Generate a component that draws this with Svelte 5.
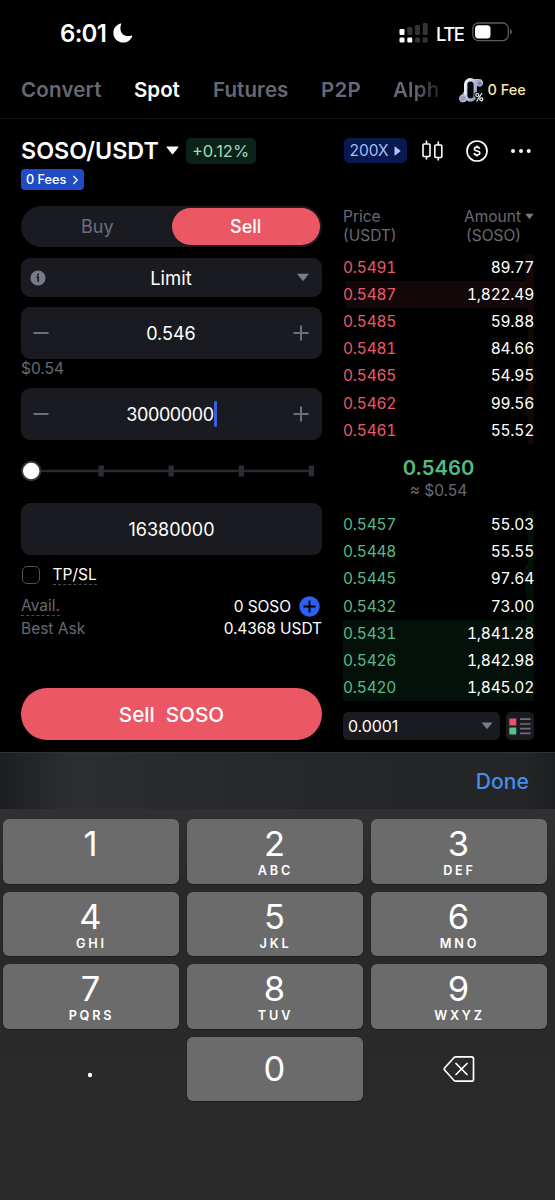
<script>
  const tabs = ['Convert', 'Spot', 'Futures', 'P2P', 'Alph'];
  const asks = [
    ['0.5491', '89.77', 4.5],
    ['0.5487', '1,822.49', 98.5],
    ['0.5485', '59.88', 3],
    ['0.5481', '84.66', 3],
    ['0.5465', '54.95', 3],
    ['0.5462', '99.56', 4.5],
    ['0.5461', '55.52', 3]
  ];
  const bids = [
    ['0.5457', '55.03', 3],
    ['0.5448', '55.55', 3],
    ['0.5445', '97.64', 4.5],
    ['0.5432', '73.00', 3.5],
    ['0.5431', '1,841.28', 100],
    ['0.5426', '1,842.98', 100],
    ['0.5420', '1,845.02', 100]
  ];
  const keys = [
    ['1', ''], ['2', 'ABC'], ['3', 'DEF'],
    ['4', 'GHI'], ['5', 'JKL'], ['6', 'MNO'],
    ['7', 'PQRS'], ['8', 'TUV'], ['9', 'WXYZ']
  ];
</script>

<div class="screen">
  <div class="status">
    <span class="time">6:01</span>
    <svg class="moon" width="20" height="20" viewBox="0 0 20 20"><path d="M7.2.6C3.200 2 .4 5.600.4 9.900c0 5.500 4.400 9.600 9.700 9.600 4.100 0 7.600-2.400 9.100-6.100.2-.6-.3-1-.9-.8-1 .4-2 .5-3 .5-4.700 0-7.900-3.200-7.900-7.900 0-1.300.2-2.500.7-3.600.3-.7-.2-1.300-.9-1z" fill="#fff" /></svg>
    <svg class="signal" width="30" height="22" viewBox="0 0 30 22">
      <g fill="#fff"><rect x=".5" y="7" width="5" height="6" rx="1.200" /><rect x=".5" y="15.500" width="5" height="5" rx="1.200" /><rect x="8.300" y="15.500" width="5" height="5" rx="1.200" /></g>
      <g fill="#343434"><rect x="8.300" y="5" width="5" height="8" rx="1.200" /><rect x="16" y="3" width="5" height="10" rx="1.200" /><rect x="23.700" y="1" width="5" height="12" rx="1.200" /><rect x="16" y="15.500" width="5" height="5" rx="1.200" /><rect x="23.700" y="15.500" width="5" height="5" rx="1.200" /></g>
    </svg>
    <span class="lte">LTE</span>
    <svg class="battery" width="42" height="20" viewBox="0 0 42 20"><rect x=".8" y="1" width="35.500" height="17.600" rx="5.500" fill="none" stroke="#5c5c5c" stroke-width="1.300" /><rect x="3" y="3.200" width="15.500" height="13.200" rx="3.500" fill="#fff" /><path d="M38 7v5.600c2.500-.8 2.500-4.800 0-5.600z" fill="#5c5c5c" /></svg>
  </div>

  <nav>
    {#each tabs as tab, i}
      <span class="tab t{i}" class:active={i === 1}>{tab}</span>
    {/each}
    <svg class="promo" width="26" height="26" viewBox="0 0 26 26">
      <defs><linearGradient id="silver" x2="1" y2="1"><stop stop-color="#eef3ff" /><stop offset=".5" stop-color="#b9c2dc" /><stop offset="1" stop-color="#8b94b0" /></linearGradient></defs>
      <path d="M13 2.500h7.500a3 3 0 0 1 0 6h-5" fill="#a0a9c4" stroke="#b5bed6" />
      <circle cx="20.600" cy="6.500" r="2.800" fill="#808aa6" stroke="#b6bfd6" />
      <path d="M7 14 2.500 20.500" stroke="#8e98b4" stroke-width="3" />
      <rect x="6.700" y="2.700" width="9.600" height="20.300" rx="4.800" fill="#030407" stroke="url(#silver)" stroke-width="3.400" />
      <path d="M6.200 19V7.300C6.200 4 8.500 2 11.300 2" fill="none" stroke="#f5f8ff" stroke-width="1" />
      <circle cx="4" cy="21.500" r="3.500" fill="#99a3be" stroke="#c0c8dd" />
      <g fill="none" stroke="#060709" stroke-width="3"><circle cx="18.300" cy="18" r="1.600" /><circle cx="22.300" cy="22.300" r="1.600" /><path d="m23 16-5.500 8.500" /></g>
      <g fill="none" stroke="#f0f3fa" stroke-width="1.200"><circle cx="18.300" cy="18" r="1.500" /><circle cx="22.300" cy="22.300" r="1.500" /><path d="m23 16-5.500 8.500" /></g>
    </svg>
    <span class="fee">0 Fee</span>
  </nav>

  <header>
    <div class="pair-row">
      <span class="pair">SOSO/USDT</span>
      <svg class="pair-caret" width="13" height="9" viewBox="0 0 13 9"><path d="M1.200.5h10.600c.6 0 .8.600.4 1L7.100 7.900c-.4.500-.9.500-1.200 0L.8 1.500C.4 1.100.6.5 1.200.5z" fill="#fff" /></svg>
      <span class="change">+0.12%</span>
      <span class="lever">200X<svg width="7" height="10" viewBox="0 0 7 10"><path d="M.5 1.100v7.800c0 .6.500.8.900.4L6.200 5.500c.4-.4.400-.7 0-1L1.400.7C1 .3.500.5.500 1.100z" fill="#a9c4ff" /></svg></span>
      <svg class="candles" width="24" height="24" viewBox="0 0 24 24" fill="none" stroke="#fff" stroke-width="1.600"><rect x="2" y="5" width="7" height="12.500" rx="1" /><path d="M5.500 1.500V5M5.500 17.500v3M17.300 2.500V6M17.300 18.500v3" /><rect x="13.800" y="6" width="7" height="12.500" rx="1" /></svg>
      <svg class="coin" width="24" height="24" viewBox="0 0 24 24" fill="none" stroke="#fff"><circle cx="12" cy="12" r="10" stroke-width="1.700" /><path d="M14.700 9.800c-.3-1.100-1.300-1.700-2.700-1.700-1.500 0-2.600.7-2.600 1.900 0 2.800 5.400 1.200 5.400 4 0 1.200-1.200 2-2.800 2-1.500 0-2.600-.8-2.800-2M12 6.500v1.600M12 15.800v1.700" stroke-width="1.600" /></svg>
      <svg class="more" width="22" height="6" viewBox="0 0 22 6" fill="#fff"><circle cx="3" cy="3" r="2" /><circle cx="11" cy="3" r="2" /><circle cx="18.700" cy="3" r="2" /></svg>
    </div>
    <span class="zero">0 Fees<svg width="7" height="10" viewBox="0 0 7 10"><path d="m1.300 1 4 4-4 4" fill="none" stroke="#fff" stroke-width="1.200" /></svg></span>
  </header>

  <main>
    <section class="form">
      <div class="side"><span>Buy</span><span class="sell">Sell</span></div>
      <div class="box type">
        <svg width="16" height="16" viewBox="0 0 16 16"><circle cx="8" cy="8" r="7.600" fill="#777b88" /><circle cx="8" cy="4.600" r="1.100" fill="#1a1b20" /><path d="M6.500 7.200h1.700v4.600" fill="none" stroke="#1a1b20" stroke-width="1.700" /></svg>
        <span>Limit</span>
        <svg width="14" height="9" viewBox="0 0 14 9"><path d="M1 .7h12L7 8.300z" fill="#7a7e8b" /></svg>
      </div>
      <div class="box step">
        <svg width="16" height="16" viewBox="0 0 16 16"><path d="M.5 8h15" stroke="#6d707c" stroke-width="2" /></svg>
        <span>0.546</span>
        <svg width="16" height="16" viewBox="0 0 16 16"><path d="M.5 8h15M8 .5v15" stroke="#6d707c" stroke-width="2" /></svg>
      </div>
      <div class="approx">$0.54</div>
      <div class="box step">
        <svg width="16" height="16" viewBox="0 0 16 16"><path d="M.5 8h15" stroke="#6d707c" stroke-width="2" /></svg>
        <span class="typing">30000000<i></i></span>
        <svg width="16" height="16" viewBox="0 0 16 16"><path d="M.5 8h15M8 .5v15" stroke="#6d707c" stroke-width="2" /></svg>
      </div>
      <svg class="slider" width="301" height="24" viewBox="0 0 301 24">
        <path d="M10 12h282" stroke="#292b33" stroke-width="2.400" />
        <g fill="#2b2d35"><rect x="77.500" y="6.500" width="5.300" height="11" /><rect x="147.500" y="6.500" width="5.300" height="11" /><rect x="217.700" y="6.500" width="5.300" height="11" /><rect x="287.700" y="6.500" width="5.300" height="11" /></g>
        <circle cx="10.200" cy="12" r="9.200" fill="#fff" stroke="#34363b" stroke-width="1.900" />
      </svg>
      <div class="box total"><span>16380000</span></div>
      <div class="tpsl"><i></i><span class="dotted">TP/SL</span></div>
      <div class="info avail"><span class="dotted">Avail.</span><b>0 SOSO<svg width="21" height="21" viewBox="0 0 21 21"><circle cx="10.500" cy="10.500" r="10.200" fill="#2d5ff2" /><path d="M4.500 10.500h12M10.500 4.500v12" stroke="#000" stroke-width="2" /></svg></b></div>
      <div class="info ask"><span>Best Ask</span><b>0.4368 USDT</b></div>
      <button class="submit">Sell&nbsp; SOSO</button>
    </section>

    <section class="book">
      <div class="head">
        <div>Price<br />(USDT)</div>
        <div class="amount"><span>Amount<svg width="9" height="7" viewBox="0 0 9 7"><path d="M.3.700h8.400L4.500 6.300z" fill="#777b86" /></svg></span><span class="unit">(SOSO)</span></div>
      </div>
      {#each asks as [price, amount, depth]}
        <div class="row red" style="--depth: {depth}%"><span>{price}</span><b>{amount}</b></div>
      {/each}
      <div class="last"><strong>0.5460</strong><span>≈ $0.54</span></div>
      {#each bids as [price, amount, depth]}
        <div class="row green" style="--depth: {depth}%"><span>{price}</span><b>{amount}</b></div>
      {/each}
      <div class="tools">
        <div class="precision">0.0001<svg width="12" height="8" viewBox="0 0 12 8"><path d="M.5.500h11L6 7.300z" fill="#7a7e8b" /></svg></div>
        <div class="mode"><svg width="22" height="18" viewBox="0 0 22 18"><path d="M.3 1.500h7v7h-7z" fill="#e25567" /><path d="M.3 10.500h7v7h-7z" fill="#5dbe8b" /><path d="M11 2.200h10.500M11 7h10.500M11 11.700h10.500M11 16.400h10.500" stroke="#6e717d" stroke-width="1.700" /></svg></div>
      </div>
    </section>
  </main>

  <div class="keyboard">
    <div class="bar"><span>Done</span></div>
    <div class="pad">
      {#each keys as [digit, letters]}
        <div class="key"><span>{digit}</span><small>{letters}</small></div>
      {/each}
      <div class="key plain"><svg width="6" height="6" viewBox="0 0 6 6"><circle cx="3" cy="3" r="2.200" fill="#fff" /></svg></div>
      <div class="key zero-key"><span>0</span></div>
      <div class="key plain"><svg class="del" width="32" height="28" viewBox="0 0 32 28" fill="none" stroke="#fff" stroke-width="1.700" stroke-linecap="round" stroke-linejoin="round"><path d="M13 1.800h15.500a2 2 0 0 1 2 2v20.400a2 2 0 0 1-2 2H13a3 3 0 0 1-2.100-.9L1.800 15.200a1.800 1.800 0 0 1 0-2.400l9.100-10.100A3 3 0 0 1 13 1.800zM13 8.500l11 11M24 8.500l-11 11" /></svg></div>
    </div>
  </div>
</div>

<style>
  :global(body) { margin: 0; background: #000; }
  .screen { width: 555px; height: 1200px; box-sizing: border-box; overflow: hidden; display: flex; flex-direction: column; background: #000; color: #fff; font-family: Inter, sans-serif; white-space: nowrap; }
  .screen * { box-sizing: border-box; }
  svg { display: block; flex: none; }
  b { font-weight: 400; }

  .status { height: 66px; flex: none; display: flex; align-items: center; padding-left: 60px; }
  .time { width: 52.500px; font-size: 24px; font-weight: 600; letter-spacing: -.7px; }
  .signal { margin-left: 266.500px; margin-top: -1px; }
  .lte { width: 35.500px; margin-left: 7px; margin-top: 2px; font-size: 18.500px; letter-spacing: -1.500px; font-weight: 500; }
  .battery { margin-top: -2px; }

  nav { height: 53px; flex: none; display: flex; align-items: center; padding: 0 0 5px 21px; border-bottom: 1px solid #111216; font-size: 20.500px; font-weight: 600; color: #666975; }
  .tab { flex: none; letter-spacing: .2px; }
  .tab.active { color: #fff; letter-spacing: 0; }
  .t0 { width: 113px; } .t1 { width: 79px; } .t2 { width: 108px; } .t3 { width: 72px; }
  .t4 { width: 48px; background: linear-gradient(90deg, #666975 45%, #191a1f); background-clip: text; color: transparent; }
  .t2.tab { letter-spacing: .1px; }
  .promo { margin-left: 18px; }
  .fee { margin-left: 2.500px; font-size: 14.500px; font-weight: 500; color: #fae7ae; }

  header { height: 87px; flex: none; padding: 18px 0 0 21px; }
  .pair-row { height: 27px; display: flex; align-items: center; }
  .pair { width: 145px; font-size: 23.300px; font-weight: 600; }
  .change { width: 70px; height: 26px; margin-left: 6.500px; border-radius: 5px; background: #0b2217; color: #a2dbbd; font-size: 16.500px; line-height: 26px; text-align: center; }
  .lever { width: 63px; height: 25px; margin-left: 88.500px; padding-left: 5.500px; display: flex; align-items: center; gap: 5px; border-radius: 5px; background: #07194f; color: #a4bffb; font-size: 15.500px; }
  .candles { margin-left: 14px; }
  .coin { margin-left: 20px; }
  .more { margin-left: 21px; }
  .zero { width: 63px; height: 21px; margin-top: 5px; padding-left: 5px; display: flex; align-items: center; gap: 6px; border-radius: 4px; background: #1f4bc5; font-size: 12.700px; font-weight: 500; }

  main { height: 546px; flex: none; display: flex; padding: 0 21px; gap: 21px; }
  .form { width: 301px; display: flex; flex-direction: column; }
  .side { height: 41px; flex: none; display: flex; align-items: center; border-radius: 21px; padding: 2px; background: #1a1b20; color: #6c6f7b; font-size: 18px; }
  .side span { flex: 1; text-align: center; line-height: 38px; height: 37px; }
  .side .sell { background: #ec5765; color: #fff; border-radius: 19px; font-weight: 500; }
  .box { flex: none; display: flex; align-items: center; justify-content: space-between; border-radius: 9px; background: #1a1b20; font-size: 18px; }
  .type { height: 39px; margin-top: 11px; padding: 0 12px 0 9px; font-size: 18.500px; }
  .step { height: 52px; padding: 0 13px 0 12px; }
  .type + .step { margin-top: 10px; }
  .approx { height: 29px; flex: none; padding-top: 1px; color: #676a75; font-size: 15.500px; line-height: 18px; }
  .typing { display: flex; align-items: center; padding-left: 1px; letter-spacing: -.4px; }
  .typing i { width: 3px; height: 26px; background: #355fe0; border-radius: 1px; }
  .slider { margin-top: 19px; }
  .total { height: 52px; margin-top: 20px; justify-content: center; }
  .tpsl { height: 22px; flex: none; margin-top: 9px; display: flex; align-items: center; font-size: 15.500px; }
  .tpsl i { width: 18px; height: 18px; margin: 0 12.500px 0 1px; border: 1.500px solid #50525a; border-radius: 5px; }
  .dotted { line-height: 18px; border-bottom: 1px dashed #4b4d56; }
  .info { height: 22px; flex: none; display: flex; align-items: center; justify-content: space-between; color: #676a75; font-size: 15.500px; }
  .info b { color: #fff; display: flex; align-items: center; gap: 8px; letter-spacing: -.08px; }
  .avail { margin-top: 9px; padding-right: 2px; }
  .submit { height: 52px; flex: none; margin: 49px 0 0; padding: 0; border: 0; border-radius: 26px; background: #ec5765; color: #fff; font: 500 20.700px Inter, sans-serif; white-space: pre; }

  .book { width: 191px; padding-top: 1px; font-size: 15.500px; }
  .head { height: 46.500px; display: flex; justify-content: space-between; color: #686b76; font-size: 15.500px; line-height: 19px; }
  .amount { display: flex; flex-direction: column; }
  .amount span { display: flex; align-items: center; gap: 4px; }
  .amount .unit { padding-left: 2px; }
  .row { height: 27.200px; display: flex; align-items: center; justify-content: space-between; background-repeat: no-repeat; background-position: right; background-size: var(--depth) 100%; font-variant-numeric: tabular-nums; letter-spacing: -.2px; }
  .red { color: #ea5a6c; background-image: linear-gradient(#140709, #140709); }
  .green { color: #56bb85; background-image: linear-gradient(#04110b, #04110b); }
  .row b { color: #fff; }
  .last { height: 67.200px; display: flex; flex-direction: column; align-items: center; padding-top: 11px; }
  .last strong { height: 25px; color: #55bb82; font-size: 20.300px; line-height: 25px; font-weight: 600; }
  .last span { color: #676a75; line-height: 22px; }
  .tools { margin-top: 10.500px; display: flex; justify-content: space-between; }
  .precision { width: 157px; height: 28px; padding: 0 7px 0 5px; display: flex; align-items: center; justify-content: space-between; border-radius: 5px; background: #1a1b20; font-size: 16px; letter-spacing: -.1px; }
  .mode { width: 28px; height: 28px; border-radius: 5px; display: flex; align-items: center; justify-content: center; background: #1a1b20; }

  .keyboard { flex: 1; background: #2a2a2a; }
  .bar { height: 57px; display: flex; align-items: center; justify-content: flex-end; padding-right: 26px; border-top: 1px solid #303134; background: linear-gradient(90deg, #1d1e20, #2c2d30 12%, #2c2d30 18%, #292b2e 27%, #242628 70%, #232526 94%, #1d1e1f); color: #468eec; font-size: 21px; font-weight: 500; }
  .bar span { letter-spacing: .1px; }
  .pad { padding: 10px 8px 0 3px; height: 391px; display: grid; grid-template-columns: repeat(3, 176px); grid-auto-rows: 64.600px; gap: 8px; background: linear-gradient(#303032, #292929 22%, #2a2a2a); }
  .key { border-radius: 6px; background: #6b6b6b; box-shadow: 0 1px 1px #1d1d1d; display: flex; flex-direction: column; align-items: center; }
  .key span { height: 42px; padding-top: 4px; padding-right: 1px; font-size: 34.500px; line-height: 42px; font-weight: 400; }
  .key small { margin-top: 3px; padding-left: 1px; font-size: 12.700px; line-height: 14px; font-weight: 600; letter-spacing: 2.800px; }
  .zero-key span { padding-top: 11px; }
  .plain { background: none; box-shadow: none; justify-content: center; padding-top: 12px; }
  .plain svg { margin-right: 2px; }
  .plain .del { margin: -12px 0 0; }
</style>
